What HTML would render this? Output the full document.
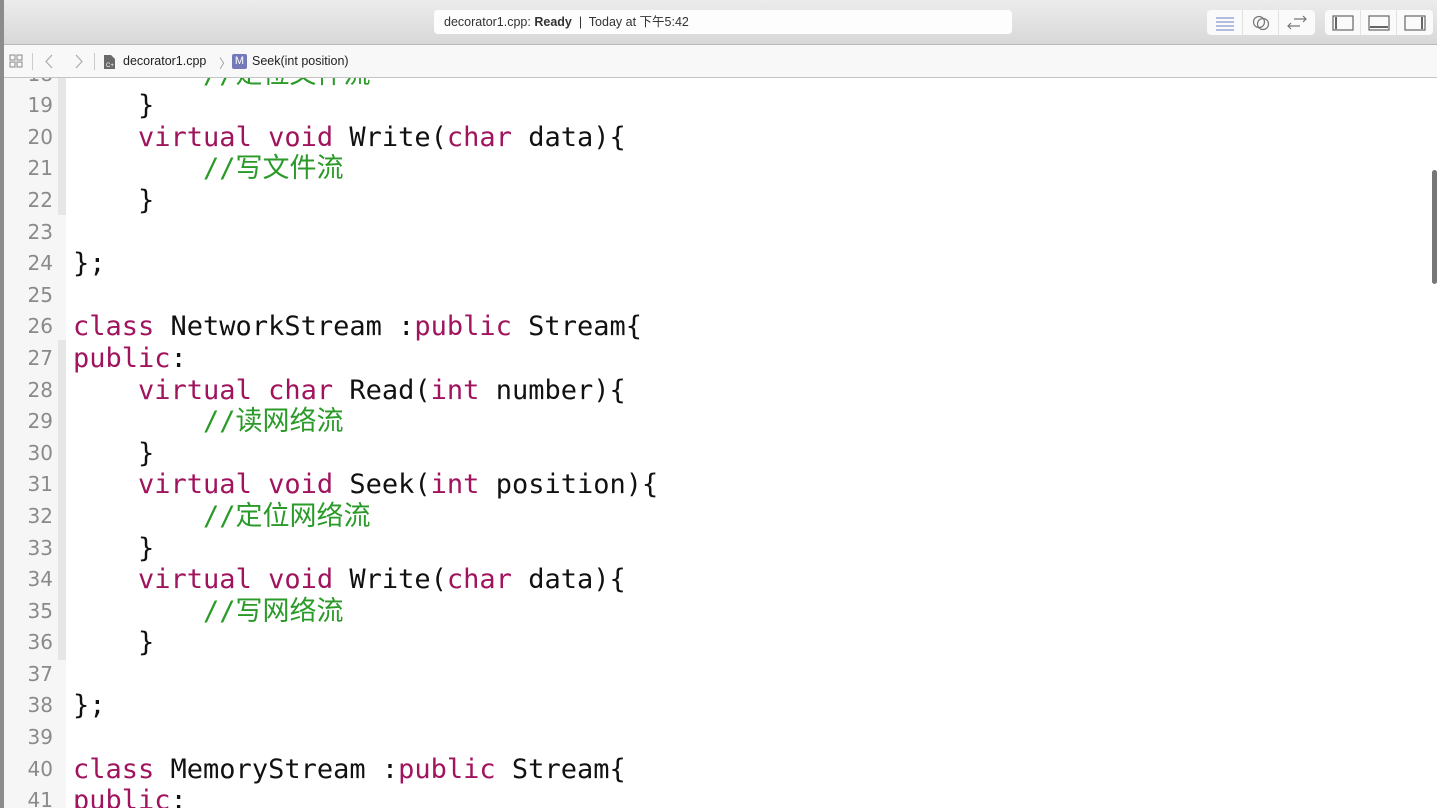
<!DOCTYPE html>
<html><head><meta charset="utf-8"><style>
*{margin:0;padding:0;box-sizing:border-box}
html,body{width:1437px;height:808px;overflow:hidden;background:#fff;font-family:"Liberation Sans","Noto Sans CJK SC",sans-serif}
#title{position:absolute;left:0;top:0;width:1437px;height:45px;background:linear-gradient(#ececec,#d8d8d8);border-bottom:1px solid #b8b8b8}
#status{position:absolute;left:434px;top:10px;width:578px;height:24px;background:#fdfdfd;border-radius:4px;font-size:12.5px;color:#333;line-height:24px;padding-left:10px}
.grp{position:absolute;top:10px;height:25px;background:#fafafa;border-radius:4px;display:flex}
.grp div{width:36px;height:25px;border-right:1px solid #e2e2e2;display:flex;align-items:center;justify-content:center}
.grp div:last-child{border-right:none}
#jump{position:absolute;left:0;top:45px;width:1437px;height:33px;background:#f8f8f8;border-bottom:1px solid #c4c4c4;font-size:12.5px;color:#222}
#leftstrip{position:absolute;left:0;top:0;width:4px;height:808px;background:#8c8c8c;z-index:5}
#editor{position:absolute;left:0;top:78px;width:1437px;height:730px;overflow:hidden}
#gutter{position:absolute;left:4px;top:0;width:62px;height:730px;background:#f6f6f6}
.fold{position:absolute;left:58px;width:8px;background:#e6e6e6}
#lines{position:absolute;left:0;top:-19.4px;font-family:"DejaVu Sans Mono","Noto Sans CJK SC",monospace;font-size:27px}
.r{height:31.6px;line-height:31.6px;white-space:pre;position:relative}
.n{position:absolute;left:0;width:53px;text-align:right;color:#8a8a8a;font-family:"DejaVu Sans",sans-serif;font-size:20px}
.c{position:absolute;left:73px;color:#111}
.k{color:#a0145e}.g{color:#2a9a28}
#scroll{position:absolute;left:1432px;top:92px;width:5px;height:114px;background:#777;border-radius:3px}
</style></head><body>
<div id="leftstrip"></div>
<div id="title">
<div id="status">decorator1.cpp: <b>Ready</b> &nbsp;|&nbsp; Today at 下午5:42</div>
<div class="grp" style="left:1207px">
<div><svg width="22" height="16"><g stroke="#8899cc" stroke-width="1.3"><path d="M2 3h18M2 7h18M2 11h18M2 15h18"/></g></svg></div>
<div><svg width="22" height="18"><g fill="none" stroke="#777" stroke-width="1.2"><circle cx="9" cy="8" r="5.5"/><circle cx="13" cy="10" r="5.5"/></g></svg></div>
<div><svg width="24" height="16"><g fill="none" stroke="#777" stroke-width="1.2"><path d="M9 4h12M18 1l3 3-3 3M3 11h12M6 8l-3 3 3 3"/></g></svg></div>
</div>
<div class="grp" style="left:1325px">
<div><svg width="22" height="16"><rect x="1" y="1" width="20" height="14" fill="none" stroke="#666" stroke-width="1.2"/><rect x="3" y="2" width="2" height="12" fill="#666"/></svg></div>
<div><svg width="22" height="16"><rect x="1" y="1" width="20" height="14" fill="none" stroke="#666" stroke-width="1.2"/><rect x="2" y="11" width="18" height="2" fill="#666"/></svg></div>
<div><svg width="22" height="16"><rect x="1" y="1" width="20" height="14" fill="none" stroke="#666" stroke-width="1.2"/><rect x="17" y="2" width="2" height="12" fill="#666"/></svg></div>
</div>
</div>
<div id="jump">
<svg style="position:absolute;left:9px;top:9px" width="15" height="15"><g fill="none" stroke="#888" stroke-width="1"><rect x="1" y="1" width="5" height="5"/><rect x="8" y="1" width="5" height="5"/><rect x="1" y="8" width="5" height="5"/><rect x="8" y="8" width="5" height="5"/></g></svg>
<div style="position:absolute;left:32px;top:8px;width:1px;height:17px;background:#ccc"></div>
<svg style="position:absolute;left:44px;top:9px" width="10" height="15"><path d="M8 1L2 7.5 8 14" fill="none" stroke="#aaa" stroke-width="1.2"/></svg>
<svg style="position:absolute;left:74px;top:9px" width="10" height="15"><path d="M2 1l6 6.5L2 14" fill="none" stroke="#aaa" stroke-width="1.2"/></svg>
<div style="position:absolute;left:94px;top:8px;width:1px;height:17px;background:#ccc"></div>
<svg style="position:absolute;left:103px;top:9px" width="13" height="16"><path d="M1 1h7l4 4v10H1z" fill="#6a6a6a"/><text x="3" y="13" font-size="6" fill="#fff" font-family="Liberation Sans">C+</text></svg>
<span style="position:absolute;left:123px;top:9px">decorator1.cpp</span>
<span style="position:absolute;left:219px;top:8px;color:#999">〉</span>
<div style="position:absolute;left:232px;top:9px;width:15px;height:15px;background:#7479b8;border-radius:2px;color:#fff;font-size:11px;text-align:center;line-height:15px">M</div>
<span style="position:absolute;left:252px;top:9px">Seek(int position)</span>
</div>
<div id="editor">
<div id="gutter"></div>
<div class="fold" style="top:0;height:137px"></div>
<div class="fold" style="top:262px;height:320px"></div>
<div id="lines">
<div class="r"><span class="n">18</span><span class="c">        <span class="g">//定位文件流</span></span></div>
<div class="r"><span class="n">19</span><span class="c">    }</span></div>
<div class="r"><span class="n">20</span><span class="c">    <span class="k">virtual</span> <span class="k">void</span> Write(<span class="k">char</span> data){</span></div>
<div class="r"><span class="n">21</span><span class="c">        <span class="g">//写文件流</span></span></div>
<div class="r"><span class="n">22</span><span class="c">    }</span></div>
<div class="r"><span class="n">23</span><span class="c"></span></div>
<div class="r"><span class="n">24</span><span class="c">};</span></div>
<div class="r"><span class="n">25</span><span class="c"></span></div>
<div class="r"><span class="n">26</span><span class="c"><span class="k">class</span> NetworkStream :<span class="k">public</span> Stream{</span></div>
<div class="r"><span class="n">27</span><span class="c"><span class="k">public</span>:</span></div>
<div class="r"><span class="n">28</span><span class="c">    <span class="k">virtual</span> <span class="k">char</span> Read(<span class="k">int</span> number){</span></div>
<div class="r"><span class="n">29</span><span class="c">        <span class="g">//读网络流</span></span></div>
<div class="r"><span class="n">30</span><span class="c">    }</span></div>
<div class="r"><span class="n">31</span><span class="c">    <span class="k">virtual</span> <span class="k">void</span> Seek(<span class="k">int</span> position){</span></div>
<div class="r"><span class="n">32</span><span class="c">        <span class="g">//定位网络流</span></span></div>
<div class="r"><span class="n">33</span><span class="c">    }</span></div>
<div class="r"><span class="n">34</span><span class="c">    <span class="k">virtual</span> <span class="k">void</span> Write(<span class="k">char</span> data){</span></div>
<div class="r"><span class="n">35</span><span class="c">        <span class="g">//写网络流</span></span></div>
<div class="r"><span class="n">36</span><span class="c">    }</span></div>
<div class="r"><span class="n">37</span><span class="c"></span></div>
<div class="r"><span class="n">38</span><span class="c">};</span></div>
<div class="r"><span class="n">39</span><span class="c"></span></div>
<div class="r"><span class="n">40</span><span class="c"><span class="k">class</span> MemoryStream :<span class="k">public</span> Stream{</span></div>
<div class="r"><span class="n">41</span><span class="c"><span class="k">public</span>:</span></div>
</div>
<div id="scroll"></div>
</div>
</body></html>
